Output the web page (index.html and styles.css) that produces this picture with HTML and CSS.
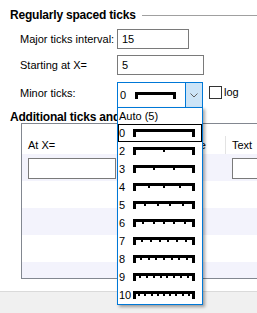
FILE: index.html
```html
<!DOCTYPE html>
<html>
<head>
<meta charset="utf-8">
<link rel="stylesheet" href="styles.css">
</head>
<body>
<div class="page">
  <div class="group-title"><span>Regularly spaced ticks</span><i class="rule"></i></div>
  <div class="form">
    <div class="field-row r1"><label>Major ticks interval:</label><div class="input w71">15</div></div>
    <div class="field-row r2"><label>Starting at X=</label><div class="input w86">5</div></div>
    <div class="field-row r3"><label>Minor ticks:</label>
      <div class="combo">
        <div class="combo-value"><span class="num">0</span>
          <svg class="cglyph" width="41" height="7" viewBox="0 0 41 7"><path d="M0 0h41v7h-3v-4H3v4H0z"/></svg>
        </div>
        <div class="combo-btn"><svg width="8" height="5" viewBox="0 0 8 5"><polyline points="0.5,0.5 4,4 7.5,0.5" fill="none" stroke="#606060" stroke-width="1"/></svg></div>
      </div>
      <span class="check"></span><span class="log">log</span>
    </div>
  </div>

  <div class="group-title t2"><span>Additional ticks and labels</span></div>
  <div class="grid">
    <div class="grid-head">
      <div class="hcell c1">At X=</div>
      <div class="hcell c2">Line style</div>
      <div class="hcell c3">Text</div>
    </div>
    <div class="grow alt">
      <div class="cell c1"><div class="input gin"></div></div>
      <div class="cell c2"></div>
      <div class="cell c3"><div class="input gin wide"></div></div>
    </div>
    <div class="grow"></div>
    <div class="grow alt"></div>
    <div class="grow"></div>
    <div class="grow alt"></div>
  </div>

  <div class="footer"></div>

  <div class="dropdown">
    <div class="item auto">Auto (5)</div>
    <div class="item focus"><span class="n">0</span><svg class="glyph" viewBox="0 0 62 8"><path d="M0 0h62v8h-3v-5H3v5H0z"/></svg></div>
    <div class="item"><span class="n">2</span><svg class="glyph" viewBox="0 0 62 8"><path d="M0 0h62v8h-3v-5H3v5H0z"/><path d="M30 3h2v2h-2z"/></svg></div>
    <div class="item"><span class="n">3</span><svg class="glyph" viewBox="0 0 62 8"><path d="M0 0h62v8h-3v-5H3v5H0z"/><path d="M20 3h2v2h-2zM40 3h2v2h-2z"/></svg></div>
    <div class="item"><span class="n">4</span><svg class="glyph" viewBox="0 0 62 8"><path d="M0 0h62v8h-3v-5H3v5H0z"/><path d="M15 3h2v2h-2zM30 3h2v2h-2zM46 3h2v2h-2z"/></svg></div>
    <div class="item"><span class="n">5</span><svg class="glyph" viewBox="0 0 62 8"><path d="M0 0h62v8h-3v-5H3v5H0z"/><path d="M11 3h2v2h-2zM24 3h2v2h-2zM36 3h2v2h-2zM49 3h2v2h-2z"/></svg></div>
    <div class="item"><span class="n">6</span><svg class="glyph" viewBox="0 0 62 8"><path d="M0 0h62v8h-3v-5H3v5H0z"/><path d="M9 3h2v2H9zM20 3h2v2h-2zM30 3h2v2h-2zM40 3h2v2h-2zM51 3h2v2h-2z"/></svg></div>
    <div class="item"><span class="n">7</span><svg class="glyph" viewBox="0 0 62 8"><path d="M0 0h62v8h-3v-5H3v5H0z"/><path d="M8 3h2v2H8zM17 3h2v2h-2zM26 3h2v2h-2zM34 3h2v2h-2zM43 3h2v2h-2zM52 3h2v2h-2z"/></svg></div>
    <div class="item"><span class="n">8</span><svg class="glyph" viewBox="0 0 62 8"><path d="M0 0h62v8h-3v-5H3v5H0z"/><path d="M7 3h2v2H7zM15 3h2v2h-2zM22 3h2v2h-2zM30 3h2v2h-2zM38 3h2v2h-2zM45 3h2v2h-2zM53 3h2v2h-2z"/></svg></div>
    <div class="item"><span class="n">9</span><svg class="glyph" viewBox="0 0 62 8"><path d="M0 0h62v8h-3v-5H3v5H0z"/><path d="M6 3h2v2H6zM13 3h2v2h-2zM20 3h2v2h-2zM27 3h2v2h-2zM33 3h2v2h-2zM40 3h2v2h-2zM47 3h2v2h-2zM54 3h2v2h-2z"/></svg></div>
    <div class="item"><span class="n">10</span><svg class="glyph" viewBox="0 0 62 8"><path d="M0 0h62v8h-3v-5H3v5H0z"/><path d="M5 3h2v2H5zM11 3h2v2h-2zM18 3h2v2h-2zM24 3h2v2h-2zM30 3h2v2h-2zM36 3h2v2h-2zM42 3h2v2h-2zM49 3h2v2h-2zM55 3h2v2h-2z"/></svg></div>
  </div>
</div>
</body>
</html>
```

FILE: styles.css
```css
html, body {
  margin: 0;
  padding: 0;
}
body {
  width: 257px;
  height: 313px;
  overflow: hidden;
  background: #ffffff;
  color: #000000;
  font-family: "Liberation Sans", Arial, sans-serif;
  font-size: 11px;
}
.page {
  position: relative;
  height: 313px;
  display: flex;
  flex-direction: column;
  overflow: hidden;
}
.group-title {
  display: flex;
  align-items: center;
  padding-left: 10px;
  margin-top: 8px;
  height: 14px;
  line-height: 14px;
  font-size: 12px;
  font-weight: bold;
  letter-spacing: -0.2px;
  white-space: nowrap;
}
.group-title .rule {
  flex: 1;
  height: 1px;
  background: #a0a0a0;
  margin-left: 6px;
}
.group-title.t2 {
  margin-top: 4px;
  height: 11px;
  line-height: 11px;
}
.form {
  display: flex;
  flex-direction: column;
  padding-left: 20px;
  margin-top: 7px;
}
.field-row {
  display: flex;
  align-items: center;
  height: 20px;
}
.field-row.r2 { margin-top: 6px; }
.field-row.r3 {
  margin-top: 7px;
  height: 26px;
  align-items: flex-start;
}
.field-row label {
  width: 97px;
  flex: none;
}
.field-row.r3 label {
  line-height: 22px;
}
.input {
  box-sizing: border-box;
  height: 20px;
  border: 1px solid #7a7a7a;
  padding-left: 4px;
  line-height: 18px;
  background: #ffffff;
}
.w71 { width: 72px; }
.w86 { width: 87px; }
.combo {
  box-sizing: border-box;
  width: 86px;
  height: 26px;
  border: 1px solid #0078d7;
  display: flex;
}
.combo-value {
  flex: 1;
  display: flex;
  align-items: center;
  padding-left: 2px;
}
.combo-value .num { width: 15px; }
.cglyph { display: block; fill: #000; }
.combo-btn {
  width: 16px;
  background: #cce4f7;
  border-left: 1px solid #0078d7;
  display: flex;
  align-items: center;
  justify-content: center;
}
.combo-btn svg { display: block; }
.check {
  box-sizing: border-box;
  width: 13px;
  height: 13px;
  border: 1px solid #333333;
  margin-left: 6px;
  margin-top: 4px;
  background: #fff;
}
.log {
  margin-left: 2px;
  line-height: 21px;
}
.grid {
  box-sizing: border-box;
  margin-left: 21px;
  margin-right: -30px;
  height: 156px;
  border: 1px solid #828790;
  overflow: hidden;
  flex: none;
}
.grid-head {
  display: flex;
  padding-top: 12px;
  height: 18px;
}
.hcell {
  box-sizing: border-box;
  height: 18px;
  line-height: 18px;
  padding-left: 6px;
  border-right: 1px solid #e3e3e3;
  white-space: nowrap;
  overflow: hidden;
}
.c1 { width: 98px; flex: none; }
.c2 { width: 106px; flex: none; }
.c3 { width: 80px; flex: none; }
.hcell.c2 { text-align: right; padding-right: 19px; }
.hcell.c3 { border-right: none; }
.grow {
  display: flex;
  height: 27px;
}
.grow.alt { background: #f3f3fc; }
.cell {
  box-sizing: border-box;
  padding-left: 6px;
  padding-top: 4px;
}
.gin { width: 88px; height: 21px; }
.cell.c3 .gin { width: 70px; }
.footer {
  margin-top: auto;
  height: 21px;
  background: #f0f0f0;
  border-top: 1px solid #dadada;
  flex: none;
}
.dropdown {
  position: absolute;
  left: 117px;
  top: 107px;
  width: 86px;
  height: 198px;
  box-sizing: border-box;
  border: 1px solid #0078d7;
  background: #ffffff;
  box-shadow: 2px 2px 3px rgba(0, 0, 0, 0.35);
}
.item {
  display: flex;
  align-items: center;
  height: 18px;
  padding-left: 1px;
  white-space: nowrap;
}
.item.auto { height: 16px; }
.item.focus { box-shadow: inset 0 0 0 1px #000; }
.item .n { width: 14px; flex: none; }
.glyph {
  display: block;
  width: 62px;
  height: 8px;
  fill: #000;
}
```
